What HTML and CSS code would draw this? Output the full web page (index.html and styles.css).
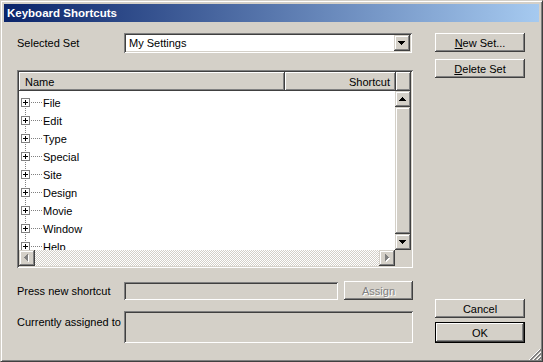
FILE: index.html
```html
<!DOCTYPE html>
<html>
<head>
<meta charset="utf-8">
<link rel="stylesheet" href="styles.css">
</head>
<body>
<svg class="defs" width="0" height="0">
  <defs>
    <symbol id="node" viewBox="0 0 22 18">
      <rect x="0.5" y="4.5" width="8" height="8" fill="#fff" stroke="#808080"/>
      <rect x="2" y="8" width="5" height="1" fill="#000"/>
      <rect x="4" y="6" width="1" height="5" fill="#000"/>
      <path d="M10 8h1v1h-1zM12 8h1v1h-1zM14 8h1v1h-1zM16 8h1v1h-1zM18 8h1v1h-1zM20 8h1v1h-1z" fill="#808080"/>
    </symbol>
    <symbol id="up" viewBox="0 0 22 18">
      <path d="M4 0h1v1H4zM4 2h1v1H4z" fill="#808080"/>
    </symbol>
    <symbol id="down" viewBox="0 0 22 18">
      <path d="M4 14h1v1H4zM4 16h1v1H4z" fill="#808080"/>
    </symbol>
  </defs>
</svg>
<div class="window">
  <div class="titlebar"><span class="title">Keyboard Shortcuts</span></div>
  <div class="content">
    <div class="left">
      <div class="row r1">
        <span class="label">Selected Set</span>
        <div class="combo sunken">
          <span class="combo-text">My Settings</span>
          <span class="drop sbtn">
            <svg width="16" height="16" viewBox="0 0 16 16" shape-rendering="crispEdges"><path d="M4 6h7v1H4zM5 7h5v1H5zM6 8h3v1H6zM7 9h1v1H7z" fill="#000"/></svg>
          </span>
        </div>
      </div>
      <div class="list sunken">
        <div class="header">
          <div class="hcol name">Name</div>
          <div class="hcol shortcut">Shortcut</div>
          <div class="hcol filler"></div>
        </div>
        <div class="list-mid">
          <div class="tree">
            <div class="trow"><svg class="twig" width="22" height="18" shape-rendering="crispEdges"><use href="#down"/><use href="#node"/></svg><span>File</span></div>
            <div class="trow"><svg class="twig" width="22" height="18" shape-rendering="crispEdges"><use href="#up"/><use href="#down"/><use href="#node"/></svg><span>Edit</span></div>
            <div class="trow"><svg class="twig" width="22" height="18" shape-rendering="crispEdges"><use href="#up"/><use href="#down"/><use href="#node"/></svg><span>Type</span></div>
            <div class="trow"><svg class="twig" width="22" height="18" shape-rendering="crispEdges"><use href="#up"/><use href="#down"/><use href="#node"/></svg><span>Special</span></div>
            <div class="trow"><svg class="twig" width="22" height="18" shape-rendering="crispEdges"><use href="#up"/><use href="#down"/><use href="#node"/></svg><span>Site</span></div>
            <div class="trow"><svg class="twig" width="22" height="18" shape-rendering="crispEdges"><use href="#up"/><use href="#down"/><use href="#node"/></svg><span>Design</span></div>
            <div class="trow"><svg class="twig" width="22" height="18" shape-rendering="crispEdges"><use href="#up"/><use href="#down"/><use href="#node"/></svg><span>Movie</span></div>
            <div class="trow"><svg class="twig" width="22" height="18" shape-rendering="crispEdges"><use href="#up"/><use href="#down"/><use href="#node"/></svg><span>Window</span></div>
            <div class="trow"><svg class="twig" width="22" height="18" shape-rendering="crispEdges"><use href="#up"/><use href="#node"/></svg><span>Help</span></div>
          </div>
          <div class="vscroll">
            <div class="sbtn arrow">
              <svg width="16" height="16" viewBox="0 0 16 16" shape-rendering="crispEdges"><path d="M7 6h1v1H7zM6 7h3v1H6zM5 8h5v1H5zM4 9h7v1H4z" fill="#000"/></svg>
            </div>
            <div class="thumb sbtn"></div>
            <div class="sbtn arrow">
              <svg width="16" height="16" viewBox="0 0 16 16" shape-rendering="crispEdges"><path d="M4 6h7v1H4zM5 7h5v1H5zM6 8h3v1H6zM7 9h1v1H7z" fill="#000"/></svg>
            </div>
          </div>
        </div>
        <div class="list-bottom">
          <div class="hscroll">
            <div class="sbtn arrow">
              <svg width="16" height="16" viewBox="0 0 16 16" shape-rendering="crispEdges"><path d="M6 8h1v1H6zM7 7h1v3H7zM8 6h1v5H8zM9 5h1v7H9z" fill="#fff"/><path d="M5 7h1v1H5zM6 6h1v3H6zM7 5h1v5H7zM8 4h1v7H8z" fill="#808080"/></svg>
            </div>
            <div class="track"></div>
            <div class="sbtn arrow">
              <svg width="16" height="16" viewBox="0 0 16 16" shape-rendering="crispEdges"><path d="M7 5h1v7H7zM8 6h1v5H8zM9 7h1v3H9zM10 8h1v1h-1z" fill="#fff"/><path d="M6 4h1v7H6zM7 5h1v5H7zM8 6h1v3H8zM9 7h1v1H9z" fill="#808080"/></svg>
            </div>
          </div>
          <div class="corner"></div>
        </div>
      </div>
      <div class="row r2">
        <span class="label">Press new shortcut</span>
        <div class="field short sunken"></div>
        <div class="btn raised assign"><span class="disabled">Assign</span></div>
      </div>
      <div class="row r3">
        <span class="label top">Currently assigned to</span>
        <div class="field tall sunken"></div>
      </div>
    </div>
    <div class="right">
      <div class="btn raised"><span><u>N</u>ew Set...</span></div>
      <div class="btn raised gap"><span><u>D</u>elete Set</span></div>
      <div class="spacer"></div>
      <div class="btn raised cancel"><span>Cancel</span></div>
      <div class="btn default ok"><span>OK</span></div>
    </div>
  </div>
  <svg class="grip" width="12" height="12" viewBox="0 0 12 12" shape-rendering="crispEdges">
    <path d="M11 0v1h-1v1h-1v1h-1v1h-1v1h-1v1h-1v1h-1v1h-1v1h-1v1h-1v1h-1v1h1v-1h1v-1h1v-1h1v-1h1v-1h1v-1h1v-1h1v-1h1v-1h1v-1h1v-1z" fill="#fff"/>
    <path d="M12 1v2h-1v1h-1v1h-1v1h-1v1h-1v1h-1v1h-1v1h-1v1h-1v1h-1v1h-2v-1h1v-1h1v-1h1v-1h1v-1h1v-1h1v-1h1v-1h1v-1h1v-1h1v-1z" fill="#808080"/>
    <path d="M12 4v1h-1v1h-1v1h-1v1h-1v1h-1v1h-1v1h-1v1h-1v-1h1v-1h1v-1h1v-1h1v-1h1v-1h1v-1h1v-1z" fill="#fff"/>
    <path d="M12 5v2h-1v1h-1v1h-1v1h-1v1h-1v1h-2v-1h1v-1h1v-1h1v-1h1v-1h1v-1h1v-1z" fill="#808080"/>
    <path d="M12 8v1h-1v1h-1v1h-1v1h-1v-1h1v-1h1v-1h1v-1z" fill="#fff"/>
    <path d="M12 9v2h-1v1h-2v-1h1v-1h1v-1z" fill="#808080"/>
  </svg>
</div>
</body>
</html>
```
FILE: styles.css
```css
* { box-sizing: border-box; }
html, body { margin: 0; padding: 0; background: #d4d0c8; }
body {
  font-family: "Liberation Sans", Arial, sans-serif;
  font-size: 11px;
  color: #000;
}
.defs { position: absolute; width: 0; height: 0; }

.window {
  position: relative;
  width: 543px;
  height: 362px;
  background: #d4d0c8;
  border: 1px solid;
  border-color: #d4d0c8 #404040 #404040 #d4d0c8;
  box-shadow: inset 1px 1px #fff, inset -1px -1px #808080;
  padding: 3px;
  display: flex;
  flex-direction: column;
}

.titlebar {
  height: 18px;
  flex: none;
  background: linear-gradient(to right, #0a246a, #a6caf0);
  display: flex;
  align-items: center;
  padding-left: 3px;
}
.title {
  color: #fff;
  font-weight: bold;
  font-size: 11.5px;
  line-height: 18px;
}

.content {
  flex: 1;
  display: flex;
  padding: 11px 0 16px 13px;
}

.left {
  width: 396px;
  display: flex;
  flex-direction: column;
}
.right {
  width: 90px;
  margin-left: 22px;
  display: flex;
  flex-direction: column;
}
.spacer { flex: 1; }

.row { display: flex; align-items: center; }
.label { width: 107px; flex: none; white-space: nowrap; }
.label.top { align-self: flex-start; padding-top: 5px; }

.sunken {
  box-shadow: inset 1px 1px #808080, inset -1px -1px #fff, inset 2px 2px #404040, inset -2px -2px #d4d0c8;
  padding: 2px;
}
.raised {
  box-shadow: inset -1px -1px #404040, inset 1px 1px #fff, inset -2px -2px #808080, inset 2px 2px #d4d0c8;
}
.sbtn {
  background: #d4d0c8;
  box-shadow: inset -1px -1px #404040, inset 1px 1px #d4d0c8, inset -2px -2px #808080, inset 2px 2px #fff;
}

/* combo */
.r1 { height: 20px; }
.combo {
  width: 288px;
  height: 20px;
  background: #fff;
  display: flex;
  align-items: center;
}
.combo-text { flex: 1; padding-left: 3px; }
.drop { width: 16px; height: 16px; display: block; }
.drop svg, .arrow svg { display: block; }

/* list */
.list {
  margin-top: 17px;
  height: 198px;
  background: #fff;
  display: flex;
  flex-direction: column;
}
.header { display: flex; height: 19px; flex: none; }
.hcol {
  background: #d4d0c8;
  box-shadow: inset -1px -1px #404040, inset 1px 1px #fff, inset -2px -2px #808080;
  display: flex;
  align-items: center;
  padding: 0 6px;
}
.hcol.name { width: 266px; }
.hcol.shortcut { width: 111px; justify-content: flex-end; }
.hcol.filler { flex: 1; padding: 0; }

.list-mid { flex: 1; display: flex; min-height: 0; }
.tree {
  flex: 1;
  overflow: hidden;
  padding-top: 3px;
  padding-left: 2px;
}
.trow { height: 18px; display: flex; align-items: center; }
.twig { display: block; flex: none; }
.vscroll { width: 16px; display: flex; flex-direction: column; }
.arrow { width: 16px; height: 16px; flex: none; }
.thumb { flex: 1; }

.list-bottom { height: 16px; flex: none; display: flex; }
.hscroll { flex: 1; display: flex; }
.track {
  flex: 1;
  background: repeating-conic-gradient(#fff 0 25%, #d4d0c8 0 50%) 0 0 / 2px 2px;
}
.corner { width: 16px; background: #d4d0c8; }

/* bottom rows */
.r2 { margin-top: 13px; height: 19px; }
.field { background: #d4d0c8; }
.field.short { width: 214px; height: 18px; }
.field.tall { width: 290px; height: 32px; }
.r3 { margin-top: 11px; align-items: flex-start; }

.btn {
  display: flex;
  align-items: center;
  justify-content: center;
  background: #d4d0c8;
  height: 19px;
  flex: none;
}
.btn.gap { margin-top: 7px; }
.assign { width: 69px; margin-left: 6px; }
.disabled { color: #808080; text-shadow: 1px 1px #fff; }
.cancel { height: 19px; }
.ok {
  margin-top: 4px;
  height: 21px;
  box-shadow: inset 0 0 0 1px #000, inset -2px -2px #404040, inset 2px 2px #fff, inset -3px -3px #808080;
}

.grip { position: absolute; right: 1px; bottom: 1px; display: block; }
```
